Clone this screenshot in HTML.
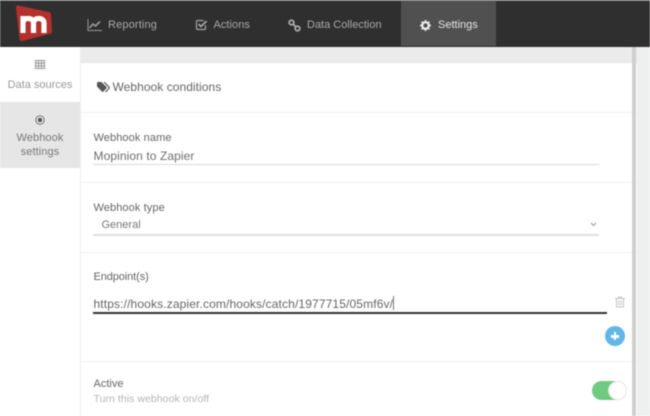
<!DOCTYPE html>
<html><head><meta charset="utf-8">
<style>
html,body{margin:0;padding:0;background:#fff}
#p{position:relative;width:650px;height:416px;overflow:hidden;background:#fff;font-family:"Liberation Sans",sans-serif;filter:blur(.4px)}
.a{position:absolute}
.t{position:absolute;white-space:nowrap;line-height:16px;color:#666}
.n{font-size:11px;color:#a9a9a9;letter-spacing:.05px}
</style></head><body><div id="p">
<div class="a" style="left:0;top:0;width:650px;height:47px;background:#2f2f2f;border-top:1px solid #777;box-sizing:border-box"></div>
<div class="a" style="left:401px;top:1px;width:95px;height:45px;background:#505050"></div>
<svg class="a" style="left:0;top:0" width="60" height="46" viewBox="0 0 60 46"><path d="M18 6 L49 12.500 Q50.500 13 50.500 14.500 L51.500 31.500 Q51.500 33 50 33.300 L22 40.500 Q20.500 41 20 39 L16.500 7.500 Q16.500 5.700 18 6 Z" fill="#b5302c" stroke="#b5302c" stroke-linejoin="round"/><path d="M23 33V16M23 23c0-6 10.500-6 10.500 0v10M33.500 23c0-6 10.500-6 10.500 0v10" fill="none" stroke="#fff" stroke-width="5.200"/></svg>
<svg class="a" style="left:87px;top:18px" width="15" height="14" viewBox="0 0 15 14" fill="none" stroke="#9a9a9a"><path d="M1 1v11.500h14" stroke-width="1"/><path d="M2.500 10l3.500-4 2.500 2 4.500-4.500" stroke-width="1.600"/></svg>
<div class="t n" style="left:108px;top:17px;letter-spacing:.15px">Reporting</div>
<svg class="a" style="left:195px;top:18px" width="13" height="13" viewBox="0 0 13 13" fill="none" stroke="#a3a3a3"><path d="M10.500 7v3.500a1 1 0 0 1-1 1h-7a1 1 0 0 1-1-1v-7a1 1 0 0 1 1-1h6" stroke-width="1.200"/><path d="M3.500 6l2.500 2.500 5.500-5.500" stroke-width="1.800"/></svg>
<div class="t n" style="left:213.500px;top:17px">Actions</div>
<svg class="a" style="left:288px;top:19px" width="13" height="13" viewBox="0 0 13 13" fill="none" stroke="#b0b0b0" stroke-width="1.700"><circle cx="3.500" cy="3.500" r="2.300"/><circle cx="9.500" cy="9.500" r="2.300"/><path d="M5 5l3 3"/></svg>
<div class="t n" style="left:307px;top:17px;letter-spacing:0">Data Collection</div>
<svg class="a" style="left:420px;top:20px" width="11" height="11" viewBox="0 0 11 11"><circle cx="5.500" cy="5.500" r="3.300" fill="none" stroke="#eee" stroke-width="2.200"/><path d="M5.500 0v11M0 5.500h11M1.600 1.600l7.800 7.800M9.400 1.600l-7.800 7.800" stroke="#eee" stroke-width="1.500" stroke-dasharray="2 7 2 0"/></svg>
<div class="t n" style="left:438px;top:17px;color:#e6e6e6;letter-spacing:0">Settings</div>

<div class="a" style="left:81px;top:47px;width:556px;height:16px;background:#ebebeb;border-bottom:1px solid #e4e4e4;box-sizing:border-box"></div>
<div class="a" style="left:80px;top:47px;width:1px;height:369px;background:#eee"></div>
<div class="a" style="left:81px;top:112px;width:556px;height:1px;background:#eee"></div>
<div class="a" style="left:81px;top:182px;width:556px;height:1px;background:#eee"></div>
<div class="a" style="left:81px;top:252px;width:556px;height:1px;background:#eee"></div>
<div class="a" style="left:81px;top:361px;width:556px;height:1px;background:#eee"></div>
<div class="a" style="left:632px;top:47px;width:4px;height:369px;background:#cfcfcf"></div>
<div class="a" style="left:637px;top:47px;width:13px;height:369px;background:#eef0f0"></div>

<svg class="a" style="left:35px;top:60px" width="10" height="9" viewBox="0 0 10 9" fill="none" stroke="#8c8c8c" stroke-width=".9"><rect x=".5" y=".5" width="9" height="8"/><path d="M.5 3.200h9M.5 5.800h9M3.500 .5v8M6.500 .5v8"/></svg>
<div class="t" style="left:0;width:80px;text-align:center;top:77px;font-size:11px;color:#999;letter-spacing:0">Data sources</div>
<div class="a" style="left:0;top:102px;width:80px;height:66px;background:#e6e6e6"></div>
<svg class="a" style="left:35px;top:115px" width="10" height="10" viewBox="0 0 10 10"><circle cx="5" cy="5" r="4.200" fill="none" stroke="#777" stroke-width="1"/><circle cx="5" cy="5" r="2.200" fill="#555"/></svg>
<div class="t" style="left:0;width:80px;text-align:center;top:132px;font-size:11px;line-height:13.500px;color:#777;letter-spacing:.1px">Webhook<br>settings</div>

<svg class="a" style="left:97px;top:82px" width="13" height="11" viewBox="0 0 13 11"><path d="M0 1a1 1 0 0 1 1-1h3.500l5 5a1 1 0 0 1 0 1.300L6.300 9.600a1 1 0 0 1-1.300 0L0 4.500z" fill="#555"/><path d="M7 0l5 5.200a1 1 0 0 1 0 1.200L8.500 10" fill="none" stroke="#555" stroke-width="1.200"/></svg>
<div class="t" style="left:112.500px;top:79px;font-size:12px;color:#666;letter-spacing:.05px">Webhook conditions</div>

<div class="t" style="left:93.500px;top:130px;font-size:11px;color:#666;letter-spacing:.1px">Webhook name</div>
<div class="t" style="left:93.500px;top:148px;font-size:12px;color:#6e6e6e;letter-spacing:.09px">Mopinion to Zapier</div>
<div class="a" style="left:93px;top:164px;width:506px;height:1px;background:#d9d9d9"></div>

<div class="t" style="left:93.500px;top:200px;font-size:11px;color:#666;letter-spacing:.1px">Webhook type</div>
<div class="t" style="left:101.500px;top:217px;font-size:11px;color:#777;letter-spacing:0">General</div>
<svg class="a" style="left:590px;top:222px" width="7" height="5" viewBox="0 0 7 5"><path d="M1 1l2.500 2.500L6 1" fill="none" stroke="#aaa" stroke-width="1.300"/></svg>
<div class="a" style="left:93px;top:234px;width:506px;height:1.500px;background:#e0e0e0"></div>

<div class="t" style="left:93.500px;top:269px;font-size:11px;color:#666;letter-spacing:-.1px">Endpoint(s)</div>
<div class="t" style="left:93.500px;top:296px;font-size:12px;color:#666;letter-spacing:.13px">https://hooks.zapier.com/hooks/catch/1977715/05mf6v/</div>
<div class="a" style="left:393px;top:296px;width:1px;height:14px;background:#777"></div>
<div class="a" style="left:93px;top:312px;width:514px;height:1.500px;background:#333"></div>
<svg class="a" style="left:615px;top:296px" width="10" height="12" viewBox="0 0 10 12" fill="none" stroke="#c4c4c4"><path d="M0 2.500h10M3.500 2.500V1h3v1.500M1.500 2.500v8.500h7V2.500M3.800 4.500V9.500M6.200 4.500V9.500"/></svg>
<div class="a" style="left:605px;top:326px;width:20px;height:20px;border-radius:50%;background:#62b7e6"></div>
<div class="a" style="left:611px;top:335px;width:8px;height:2.500px;background:#fff"></div>
<div class="a" style="left:613.800px;top:332px;width:2.500px;height:8px;background:#fff"></div>

<div class="t" style="left:93.500px;top:376px;font-size:11px;color:#666;letter-spacing:0">Active</div>
<div class="t" style="left:93.500px;top:391px;font-size:10.500px;color:#b5b5b5;letter-spacing:.05px">Turn this webhook on/off</div>
<div class="a" style="left:592px;top:381px;width:34px;height:19px;border-radius:10px;background:#6fcb7f"></div>
<div class="a" style="left:608px;top:381px;width:17px;height:17px;border-radius:50%;background:#fff;border:1px solid #e4e4e4"></div>
</div></body></html>
